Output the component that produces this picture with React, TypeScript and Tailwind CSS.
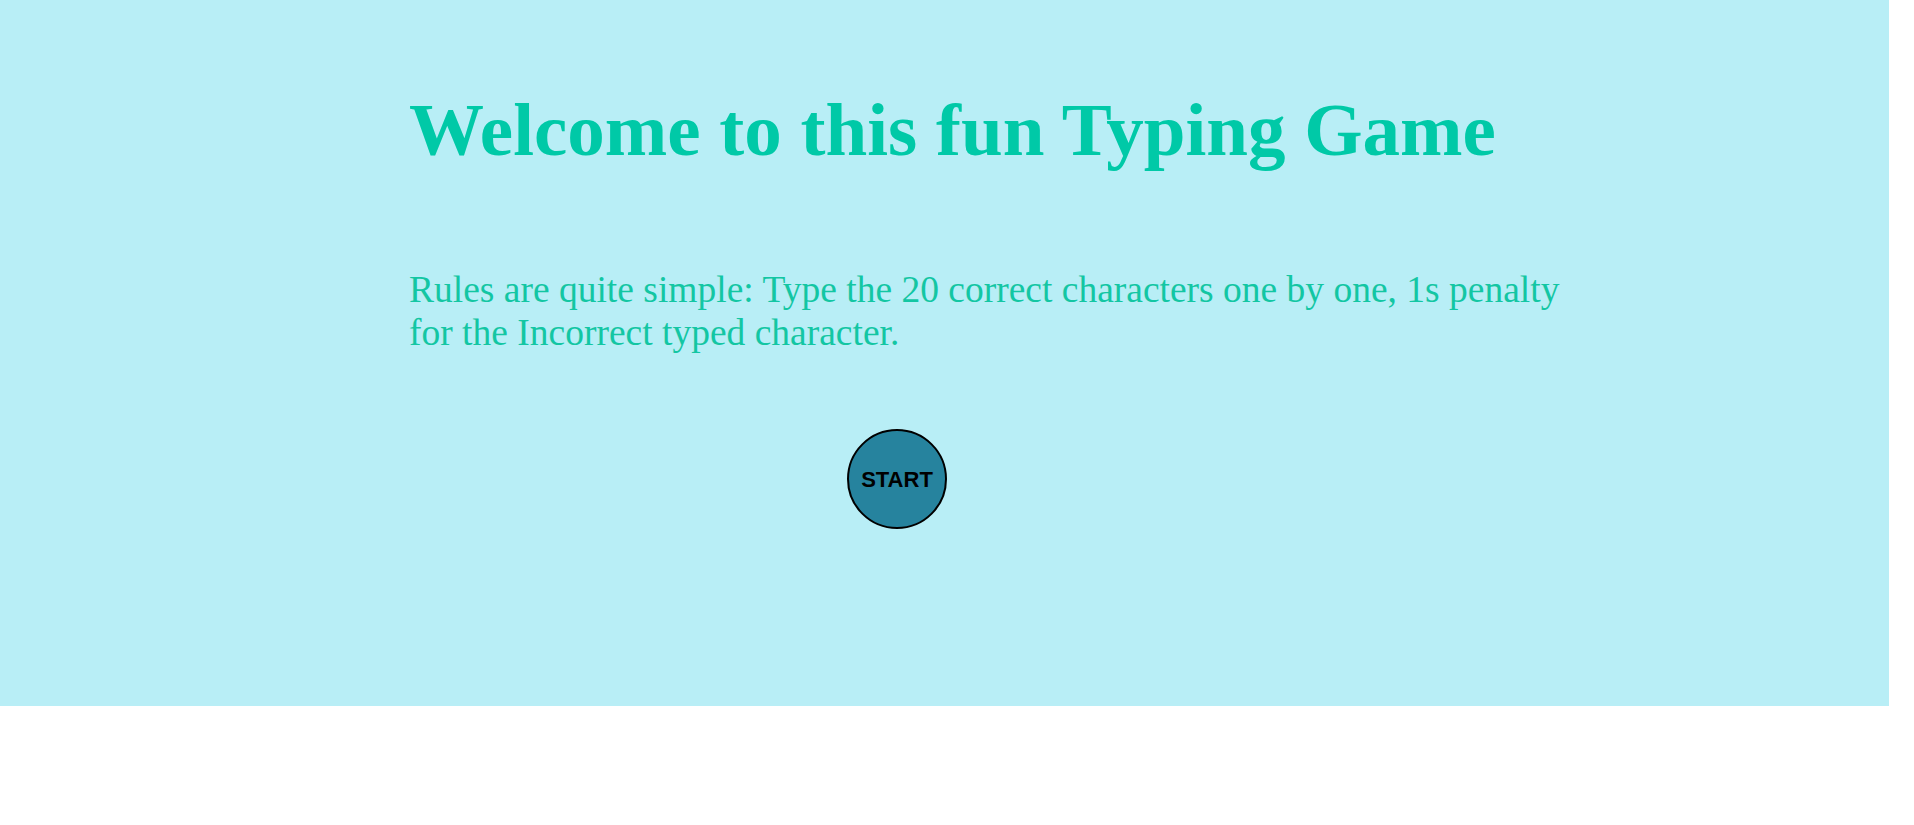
export default function App() {
  return (
    <div className="w-[1889px] h-[706px] bg-[#b8eef6] font-['Liberation_Serif','Times_New_Roman',serif]">
      <div className="flex flex-col items-start pl-[409px] pt-[87px]">
        <h1 className="text-[75px] font-bold leading-[normal] text-[#00c9a7]">
          Welcome to this fun Typing Game
        </h1>
        <p className="mt-[95px] max-w-[1175px] text-[37.5px] leading-[43px] text-[#13c6a3]">
          Rules are quite simple: Type the 20 correct characters one by one, 1s penalty for the Incorrect typed character.
        </p>
        <button className="mt-[75px] ml-[438px] flex h-[100px] w-[100px] items-center justify-center rounded-full border-2 border-black bg-[#26839e] font-['Liberation_Sans',Arial,sans-serif] text-[22px] font-bold text-black">
          START
        </button>
      </div>
    </div>
  );
}
